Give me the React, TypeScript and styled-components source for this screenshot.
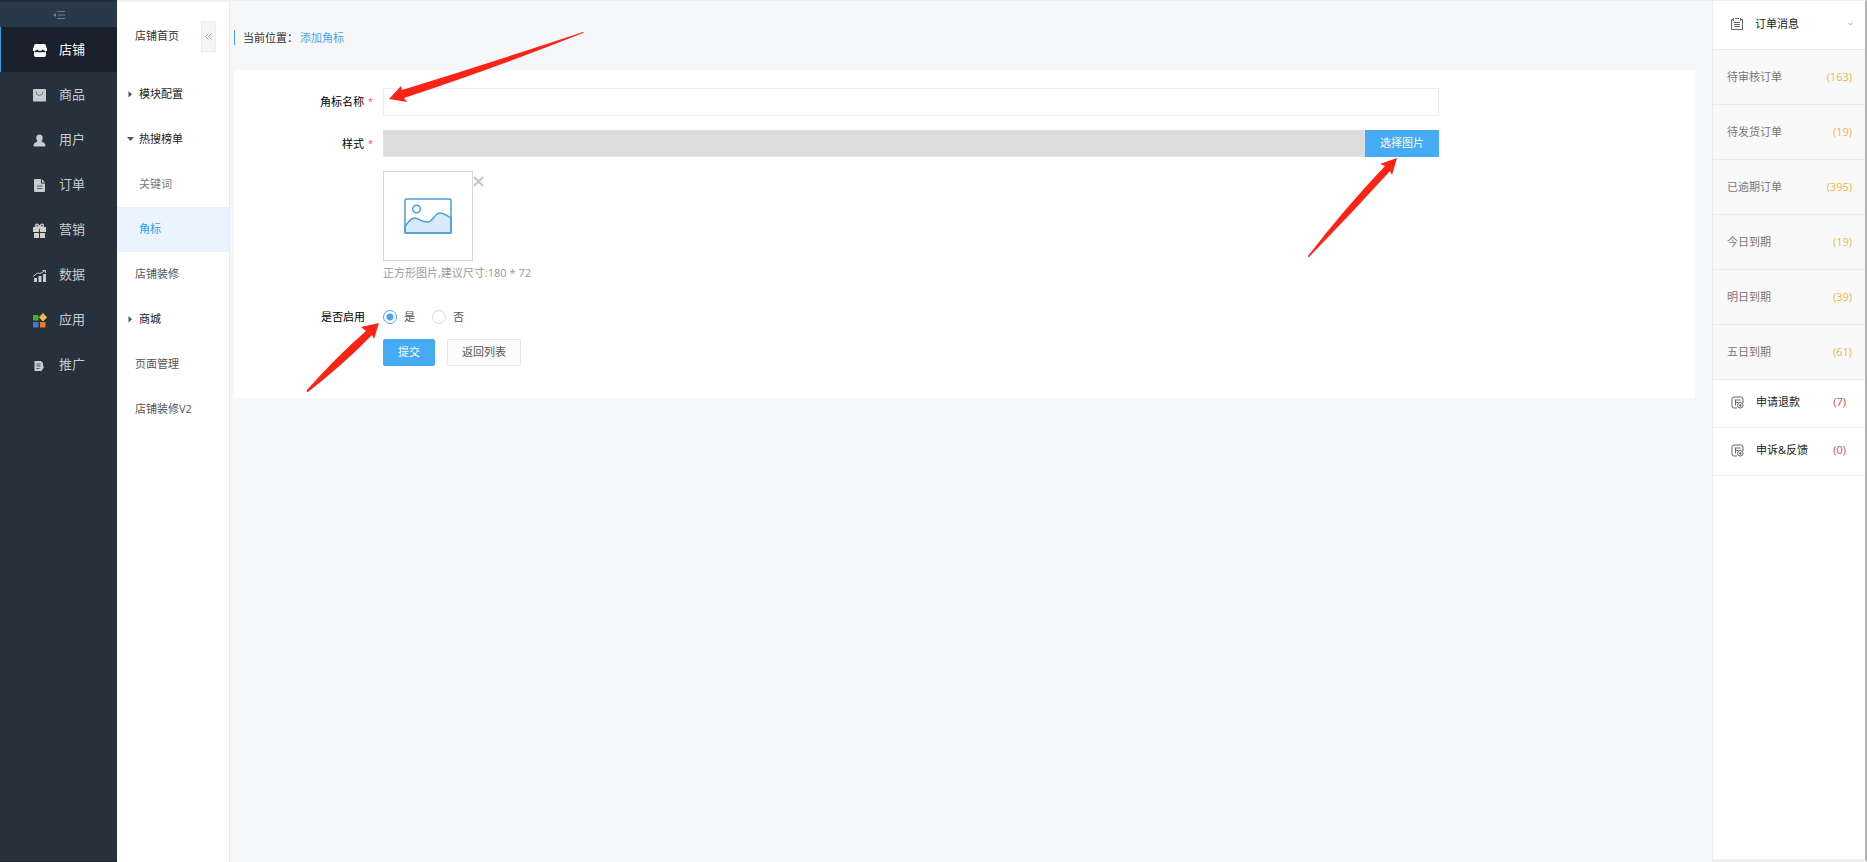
import React from "react";
import styled, { createGlobalStyle } from "styled-components";

const Global = createGlobalStyle`
  * { box-sizing: border-box; }
  body {
    margin: 0;
    background: #f5f7f9;
    font-family: "Open Sans", "Noto Sans CJK SC", sans-serif;
    font-size: 11px;
    line-height: 16px;
    color: #333;
  }
  a { color: inherit; text-decoration: none; }
  button, input { font: inherit; }
`;

const Page = styled.div`
  position: relative;
  display: flex;
  min-height: 100vh;
`;

const Sidebar = styled.nav`
  flex: 0 0 117px;
  background: #26313c;
  border-bottom: 1px solid #1d2530;
`;

const SidebarToggle = styled.button`
  display: flex;
  align-items: center;
  justify-content: center;
  width: 100%;
  height: 27px;
  padding: 0;
  border: 0;
  border-top: 2px solid #202d39;
  background: #283948;
`;

const NavLink = styled.a<{ $active?: boolean }>`
  display: flex;
  align-items: center;
  gap: 12px;
  height: 45px;
  padding: 0 0 2px ${(p) => (p.$active ? 31 : 32)}px;
  border-left: ${(p) => (p.$active ? "1px solid #2f9fe0" : "0")};
  background: ${(p) => (p.$active ? "#1a212d" : "transparent")};
  color: ${(p) => (p.$active ? "#fff" : "#c9ccd0")};
  font-size: 13px;
  svg { margin-top: 4px; }
`;

const SubMenu = styled.nav`
  flex: 0 0 113px;
  background: #fff;
  border-top: 2px solid #f0f1f3;
  border-right: 1px solid #e6e9ed;
`;

const SubHead = styled.div`
  display: flex;
  align-items: center;
  justify-content: space-between;
  height: 70px;
  padding: 0 13px 2px 18px;
`;

const Collapse = styled.button`
  display: flex;
  align-items: center;
  justify-content: center;
  width: 15px;
  height: 31px;
  padding: 0;
  border: 1px solid #ececec;
  background: #f5f5f5;
`;

const SubLink = styled.a<{ $kind: "group" | "child" | "plain"; $active?: boolean }>`
  display: flex;
  align-items: center;
  gap: 5px;
  height: 45px;
  padding-bottom: 2px;
  padding-left: ${(p) => ({ group: 10, child: 22, plain: 18 })[p.$kind]}px;
  background: ${(p) => (p.$active ? "#ebf4fe" : "transparent")};
  color: ${(p) => (p.$active ? "#1ea5e6" : p.$kind === "group" ? "#222" : p.$kind === "child" ? "#777" : "#555")};
`;

const Main = styled.main`
  flex: 1;
  min-width: 0;
  padding: 0 17px 0 4px;
  border-top: 1px solid #eceef0;
`;

const Crumb = styled.div`
  display: flex;
  align-items: center;
  height: 69px;
  padding-top: 4px;
`;

const CrumbText = styled.div`
  display: flex;
  gap: 2px;
  align-items: center;
  height: 15px;
  padding-left: 8px;
  border-left: 1px solid #3f9fe8;
  a { color: #4da3e6; }
`;

const Card = styled.form`
  display: flex;
  flex-direction: column;
  gap: 14px;
  padding: 18px 256px 32px 0;
  background: #fff;
`;

const Row = styled.div`
  display: flex;
  align-items: flex-start;
`;

const Label = styled.label<{ $required?: boolean }>`
  display: flex;
  flex: 0 0 149px;
  gap: 4px;
  justify-content: flex-end;
  padding: 6px ${(p) => (p.$required ? 10 : 18)}px 0 0;
  color: #000;
`;

const Star = styled.span`
  font-size: 9px;
  color: #e05050;
`;

const TextInput = styled.input`
  flex: 1;
  min-width: 0;
  height: 28px;
  padding: 0 8px;
  border: 1px solid #ececec;
  background: #fff;
`;

const PathInput = styled.input`
  flex: 1;
  min-width: 0;
  height: 27px;
  padding: 0 8px;
  border: 1px solid #e2e2e2;
  border-right: 0;
  background: #dcdcdc;
`;

const Button = styled.button<{ $tone?: "plain"; $wide?: boolean; $square?: boolean }>`
  width: ${(p) => (p.$wide ? 74 : 52)}px;
  height: 27px;
  padding: 0 0 1px;
  border: ${(p) => (p.$tone ? "1px solid #e6e6e6" : "0")};
  border-radius: ${(p) => (p.$square ? 0 : 2)}px;
  background: ${(p) => (p.$tone ? "#fcfcfc" : "#45abf5")};
  color: ${(p) => (p.$tone ? "#555" : "#fff")};
`;

const Preview = styled.div`
  display: flex;
  align-items: flex-start;
`;

const Thumb = styled.div`
  display: flex;
  align-items: center;
  justify-content: center;
  width: 90px;
  height: 90px;
  border: 1px solid #d6d8d9;
`;

const Remove = styled.button`
  display: flex;
  margin-top: 5px;
  padding: 0;
  border: 0;
  background: none;
`;

const Indented = styled.div`
  margin-left: 149px;
`;

const Hint = styled.p`
  margin: 4px 0 8px;
  color: #999;
`;

const Options = styled.div`
  display: flex;
  gap: 17px;
  align-items: center;
  height: 27px;
`;

const Option = styled.label`
  display: flex;
  gap: 7px;
  align-items: center;
  color: #555;
`;

const Radio = styled.input`
  appearance: none;
  width: 14px;
  height: 14px;
  margin: 0;
  border: 1px solid #dcdcdc;
  border-radius: 50%;
  background: #fff;
  &:checked {
    border-color: #45a5f0;
    background: radial-gradient(circle, #45a5f0 3px, #fff 4px);
  }
`;

const Actions = styled.div`
  display: flex;
  gap: 12px;
  margin: -5px 0 0 149px;
`;

const Orders = styled.aside`
  display: flex;
  flex-direction: column;
  flex: 0 0 155px;
  border-top: 1px solid #eceef0;
  border-left: 1px solid #e9ebed;
  border-right: 2px solid #b4b4b4;
  border-bottom: 3px solid #f0f0f0;
  background: #fff;
`;

const OrdersHead = styled.a<{ $first?: boolean }>`
  display: flex;
  align-items: center;
  gap: ${(p) => (p.$first ? 11 : 12)}px;
  height: ${(p) => (p.$first ? 49 : 48)}px;
  padding: ${(p) => (p.$first ? "0 12px 2px 17px" : "0 19px 3px 18px")};
  border-bottom: 1px solid #ececec;
  color: #222;
  > :last-child { margin-left: auto; }
`;

const OrderLink = styled.a`
  display: flex;
  align-items: center;
  justify-content: space-between;
  height: 55px;
  padding: 0 13px 0 14px;
  border-bottom: 1px solid #ececec;
  background: #f9f9f9;
  color: #777;
`;

const Count = styled.span<{ $red?: boolean }>`
  color: ${(p) => (p.$red ? "#d9484c" : "#f2b544")};
`;

const Arrows = styled.svg`
  position: absolute;
  top: 0;
  left: 0;
  pointer-events: none;
`;

const icons: Record<string, React.ReactNode> = {
  shop: (
    <>
      <rect x="2" y="1" width="12" height="13" rx="2" fill="#fff" />
      <path d="M1 4.500h14V8H1z" fill="#fff" />
      <path d="M2.500 8.500h1.500l1-1 1.500 1h3l1.500-1 1 1h1.500" stroke="#1a212d" strokeWidth="1.600" fill="none" />
    </>
  ),
  goods: (
    <>
      <rect x="1" y="1" width="13" height="12.500" rx="1" fill="#c9cccf" />
      <path d="M4 3.500q0 4 3.500 4T11 3.500" stroke="#707880" fill="none" />
    </>
  ),
  user: (
    <path d="M7.500 1.500c2 0 3.300 1.500 3.300 3.300S9.500 8.500 9.300 8.500q4 1 4.200 4 0 1-1.200 1h-9.600q-1.200 0-1.200-1 .2-3 4.200-4C5.500 8.500 4.200 6.600 4.200 4.800S5.500 1.500 7.500 1.500z" fill="#c9cccf" />
  ),
  order: (
    <>
      <path d="M3 1h6v4.500h4V13q0 1-1 1H3q-1 0-1-1V2q0-1 1-1zM10 1l3 3.500h-3z" fill="#c9cccf" />
      <path d="M5 8h5.500M5 10.500h5.500" stroke="#55606a" />
    </>
  ),
  gift: (
    <>
      <path d="M1 4h6v5H1zM8 4h6v5H8zM2 10h5v5H2zM8 10h5v5H8z" fill="#d2cfcc" />
      <path d="M7.500 4.500Q2.500 4 4 1.500 6 0 7.500 4.500 9 0 11 1.500 12.500 4 7.500 4.500z" fill="none" stroke="#d2cfcc" strokeWidth="1.400" />
    </>
  ),
  data: (
    <>
      <path d="M2 10h3v4H2zM6.500 8h3v6h-3zM11 6h3v8h-3z" fill="#c9cccf" />
      <path d="M1 8.500 5.500 5l2.500.500L12.500 3M10.500 2.500h3V5" stroke="#c9cccf" fill="none" />
    </>
  ),
  apps: (
    <>
      <rect x="1" y="2" width="5.500" height="5.500" fill="#52a831" />
      <path d="m11 .500 3.500 3.800L11 8 7.500 4.300z" stroke="#eebd59" strokeLinejoin="round" fill="#eebd59" />
      <rect x="1" y="9" width="5.500" height="5.500" fill="#4277dc" />
      <rect x="8" y="9" width="5.500" height="5.500" fill="#ef7a22" />
    </>
  ),
  promo: (
    <>
      <path d="M2.500 3H9l2 2v3.500L8 13H2.500z" fill="#c9cccf" />
      <path d="M4.500 6h4M4.500 8h4M4.500 10.500h3" stroke="#4b5661" />
      <path d="m8.500 13 3-4.500" stroke="#c9cccf" strokeWidth="1.500" />
    </>
  ),
};

const nav = [
  ["shop", "店铺"],
  ["goods", "商品"],
  ["user", "用户"],
  ["order", "订单"],
  ["gift", "营销"],
  ["data", "数据"],
  ["apps", "应用"],
  ["promo", "推广"],
];

type SubItem = { text: string; kind: "group" | "child" | "plain"; open?: boolean; active?: boolean };
const subItems: SubItem[] = [
  { text: "模块配置", kind: "group" },
  { text: "热搜榜单", kind: "group", open: true },
  { text: "关键词", kind: "child" },
  { text: "角标", kind: "child", active: true },
  { text: "店铺装修", kind: "plain" },
  { text: "商城", kind: "group" },
  { text: "页面管理", kind: "plain" },
  { text: "店铺装修V2", kind: "plain" },
];

const orderItems: [string, number][] = [
  ["待审核订单", 163],
  ["待发货订单", 19],
  ["已逾期订单", 395],
  ["今日到期", 19],
  ["明日到期", 39],
  ["五日到期", 61],
];

const Caret = ({ open }: { open?: boolean }) => (
  <svg width="7" height="8" viewBox="0 0 7 8">
    <path d={open ? "M0 2h7L3.500 6z" : "M1.500 1v6.500L5 4.200z"} fill="#555" />
  </svg>
);

const ClipboardIcon = () => (
  <svg width="14" height="14" viewBox="0 0 14 14" fill="none" stroke="#666">
    <path d="M3.500 2.500h-2v10h11v-10h-2M3.500 1v3M10.500 1v3M5 1.500h4M4 5.500h6M4 7.500h6M4 9.500h6" />
  </svg>
);

const RefundIcon = () => (
  <svg width="13" height="13" viewBox="0 0 13 13" fill="none" stroke="#666">
    <path d="M6 12H3q-2 0-2-2V3q0-2 2-2h7q2 0 2 2v4M3.500 4h6M4.500 4v5.500M4.500 6.500h3" />
    <circle cx="9.300" cy="9.300" r="2.800" />
    <path d="M9.300 8v3M8 9.300h2.600" />
  </svg>
);

export default function App() {
  return (
    <>
      <Global />
      <Page>
        <Sidebar>
          <SidebarToggle aria-label="收起菜单">
            <svg width="12" height="8" viewBox="0 0 12 8">
              <path d="M4 .500h8M5 4h7M4 7.500h8" stroke="#71808d" />
              <path d="M0 4l3-2v4z" fill="#71808d" />
            </svg>
          </SidebarToggle>
          {nav.map(([icon, text], i) => (
            <NavLink key={icon} href="#" $active={i === 0}>
              <svg width="15" height="15" viewBox="0 0 15 15">{icons[icon]}</svg>
              {text}
            </NavLink>
          ))}
        </Sidebar>

        <SubMenu>
          <SubHead>
            <a href="#">店铺首页</a>
            <Collapse aria-label="收起">
              <svg width="7" height="7" viewBox="0 0 7 7" fill="none" stroke="#aaa">
                <path d="M3.500 .500l-3 3 3 3M6.500 .500l-3 3 3 3" />
              </svg>
            </Collapse>
          </SubHead>
          {subItems.map((s) => (
            <SubLink key={s.text} href="#" $kind={s.kind} $active={s.active}>
              {s.kind === "group" && <Caret open={s.open} />}
              {s.text}
            </SubLink>
          ))}
        </SubMenu>

        <Main>
          <Crumb>
            <CrumbText>
              <span>当前位置：</span>
              <a href="#">添加角标</a>
            </CrumbText>
          </Crumb>
          <Card onSubmit={(e) => e.preventDefault()}>
            <Row>
              <Label htmlFor="name" $required>角标名称<Star>*</Star></Label>
              <TextInput id="name" />
            </Row>
            <Row>
              <Label htmlFor="style" $required>样式<Star>*</Star></Label>
              <PathInput id="style" readOnly />
              <Button type="button" $wide $square>选择图片</Button>
            </Row>
            <Indented>
              <Preview>
                <Thumb>
                  <svg width="48" height="36" viewBox="0 0 48 36" fill="none" stroke="#4a9fe0" strokeWidth="1.500">
                    <path d="M1 29C5 22 8 20 11 20s8 5 13 4 7-9 12-9 7 3 11 5v15H1z" fill="#d9eaf9" />
                    <rect x="1" y="1" width="46" height="34" rx="1.500" />
                    <circle cx="12.500" cy="11" r="3.800" />
                  </svg>
                </Thumb>
                <Remove type="button" aria-label="删除图片">
                  <svg width="11" height="11" viewBox="0 0 11 11" stroke="#c4c4c4" strokeWidth="2">
                    <path d="m1 1 9 9M10 1l-9 9" />
                  </svg>
                </Remove>
              </Preview>
              <Hint>正方形图片,建议尺寸:180 * 72</Hint>
            </Indented>
            <Row>
              <Label as="span" id="enabled">是否启用</Label>
              <Options role="radiogroup" aria-labelledby="enabled">
                <Option><Radio type="radio" name="enabled" defaultChecked />是</Option>
                <Option><Radio type="radio" name="enabled" />否</Option>
              </Options>
            </Row>
            <Actions>
              <Button type="submit">提交</Button>
              <Button type="button" $tone="plain" $wide>返回列表</Button>
            </Actions>
          </Card>
        </Main>

        <Orders>
          <OrdersHead href="#" $first>
            <ClipboardIcon />
            <span>订单消息</span>
            <svg width="5" height="4" viewBox="0 0 5 4" fill="none" stroke="#aaa">
              <path d="m.500 1 2 2 2-2" />
            </svg>
          </OrdersHead>
          {orderItems.map(([text, n]) => (
            <OrderLink key={text} href="#">
              <span>{text}</span>
              <Count>({n})</Count>
            </OrderLink>
          ))}
          <OrdersHead href="#">
            <RefundIcon />
            <span>申请退款</span>
            <Count $red>(7)</Count>
          </OrdersHead>
          <OrdersHead href="#">
            <RefundIcon />
            <span>申诉&amp;反馈</span>
            <Count $red>(0)</Count>
          </OrdersHead>
        </Orders>

        <Arrows width="1500" height="420" viewBox="0 0 1500 420" fill="#fb2315">
          <path d="M389 99 401 86 402 90Q490 63 583 32 585 32 583 33 500 66 404 98L407 102z" />
          <path d="M379 323 361 327 366 331Q335 358 307 390 306 392 308 392 345 363 372 335L374 339z" />
          <path d="M1397 158 1380 164 1385 166Q1345 208 1308 256 1308 258 1309 257 1350 215 1390 171L1392 175z" />
        </Arrows>
      </Page>
    </>
  );
}
